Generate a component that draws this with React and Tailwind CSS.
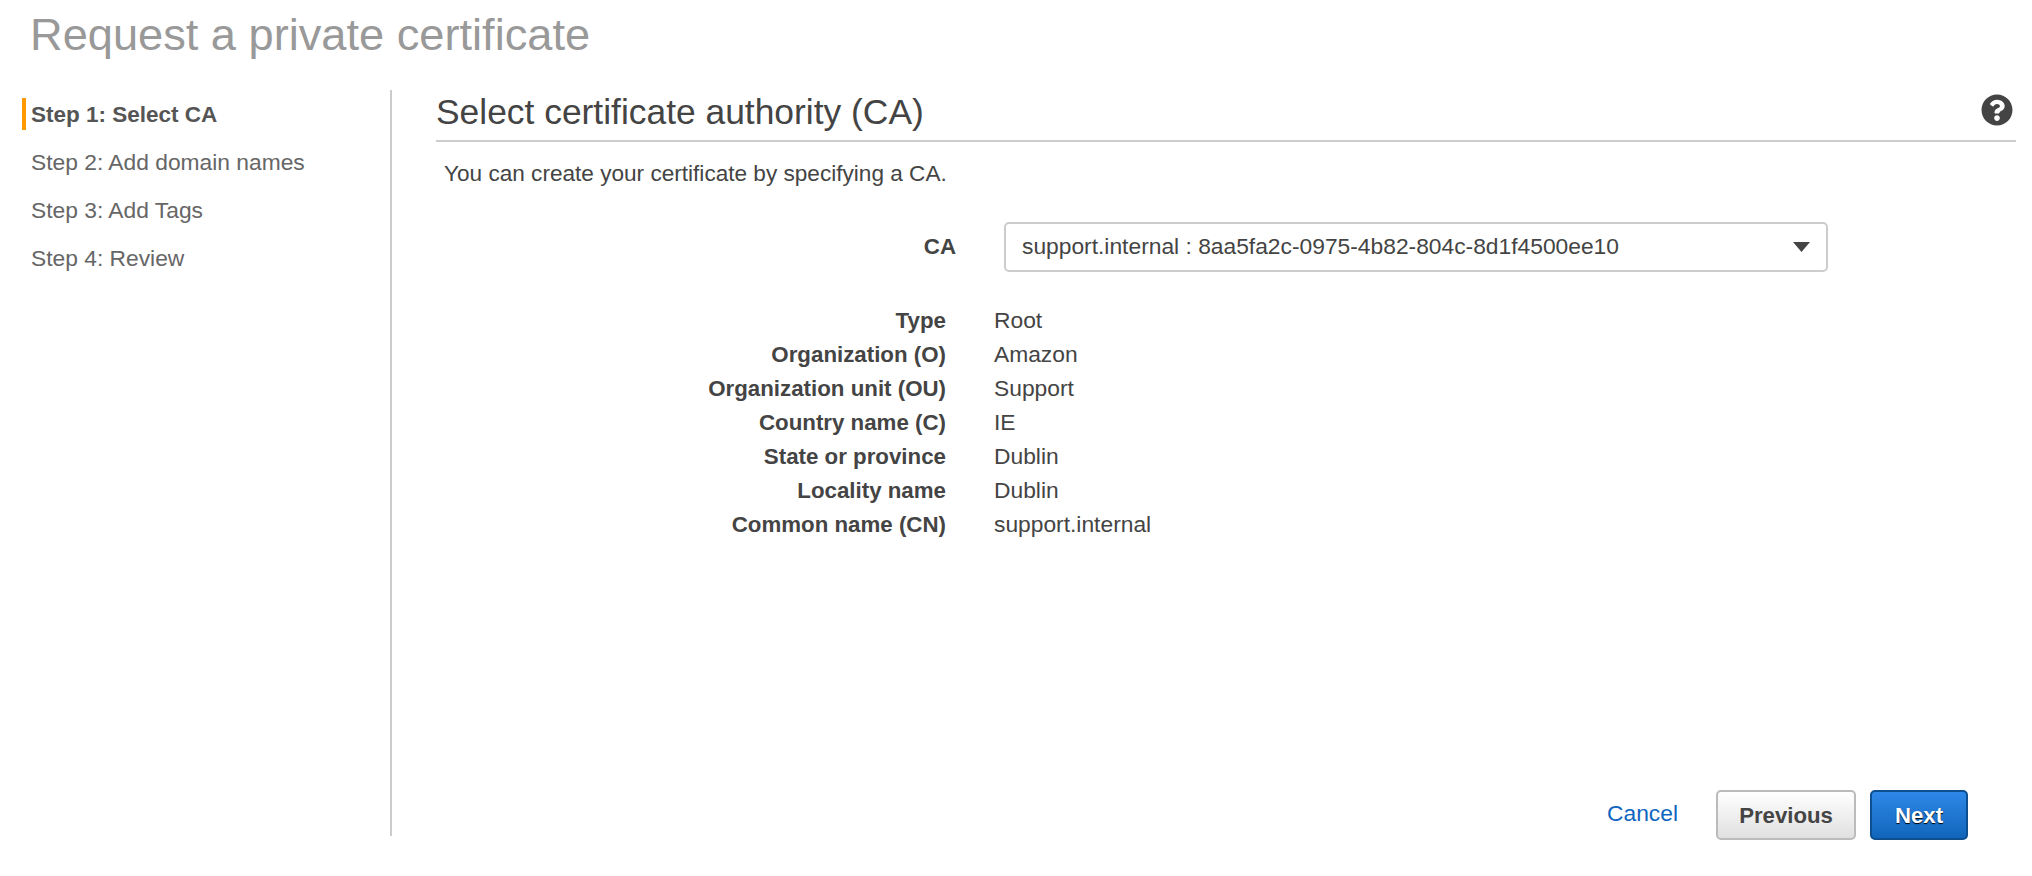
import { FaQuestionCircle } from 'react-icons/fa';

const steps = ['Step 1: Select CA', 'Step 2: Add domain names', 'Step 3: Add Tags', 'Step 4: Review'];

const details = [
    ['Type', 'Root'],
    ['Organization (O)', 'Amazon'],
    ['Organization unit (OU)', 'Support'],
    ['Country name (C)', 'IE'],
    ['State or province', 'Dublin'],
    ['Locality name', 'Dublin'],
    ['Common name (CN)', 'support.internal'],
];

export default function App() {
    return (
        <div className="h-[876px] bg-white font-['Liberation_Sans',Arial,sans-serif] text-[22.8px] text-[#444] overflow-hidden">
            <h1 className="h-[90px] pl-[30px] pt-[9px] text-[45.2px] leading-[52px] font-normal text-[#999]">
                Request a private certificate
            </h1>
            <div className="flex h-[746px]">
                <div className="w-[392px] shrink-0 border-r-2 border-[#ccc] pl-[22px]">
                    {steps.map((step, index) => (
                        <div key={step} className="flex h-[48px] items-center">
                            <span className={`h-[32px] w-[4px] ${index === 0 ? 'bg-[#f90]' : ''}`}></span>
                            <span className={`ml-[5px] ${index === 0 ? 'pt-[2px] text-[22.5px] font-bold text-[#555]' : 'text-[#666]'}`}>{step}</span>
                        </div>
                    ))}
                </div>
                <div className="flex flex-1 flex-col pl-[44px] pr-[16px]">
                    <div className="flex h-[52px] items-start justify-between border-b-2 border-[#ccc]">
                        <h2 className="text-[35.4px] leading-[44px] font-normal text-[#444]">Select certificate authority (CA)</h2>
                        <FaQuestionCircle className="mt-[4px] mr-[3px] h-[32px] w-[32px] text-[#444]" />
                    </div>
                    <p className="pl-[8px] pt-[19px] text-[22.6px] leading-[26px]">You can create your certificate by specifying a CA.</p>
                    <div className="mt-[35px] flex items-center">
                        <label className="w-[520px] text-right text-[22.3px] font-bold">CA</label>
                        <div className="ml-[48px] flex h-[50px] w-[824px] items-center justify-between rounded-[5px] border-2 border-[#ccc] pl-[16px] pr-[16px]">
                            <span className="pb-[2px]">support.internal : 8aa5fa2c-0975-4b82-804c-8d1f4500ee10</span>
                            <svg width="17" height="10" viewBox="0 0 17 10" className="text-[#444]">
                                <path d="M0 0H17L8.500 10Z" fill="currentColor" />
                            </svg>
                        </div>
                    </div>
                    <div className="mt-[31px] flex-1">
                        {details.map(([label, value]) => (
                            <div key={label} className="flex h-[34px] items-center">
                                <div className="w-[510px] pt-[2px] text-right text-[22.3px] font-bold">{label}</div>
                                <div className="ml-[48px]">{value}</div>
                            </div>
                        ))}
                    </div>
                    <div className="mb-[-4px] flex items-start justify-end pr-[48px]">
                        <a href="#" className="mr-[38px] mt-[7px] text-[#0f66c0] leading-[32px]">Cancel</a>
                        <button className="h-[50px] w-[140px] rounded-[5px] border-2 border-[#bbb] bg-gradient-to-b from-white to-[#e0e0e0] pt-[2px] text-[22.2px] font-bold text-[#444]">
                            Previous
                        </button>
                        <button className="ml-[14px] h-[50px] w-[98px] rounded-[5px] border-2 border-[#0d4f8f] bg-gradient-to-b from-[#2e88e8] to-[#1166bb] pt-[2px] text-[22.2px] font-bold text-white [text-shadow:0_1px_1px_#000]">
                            Next
                        </button>
                    </div>
                </div>
            </div>
        </div>
    );
}
